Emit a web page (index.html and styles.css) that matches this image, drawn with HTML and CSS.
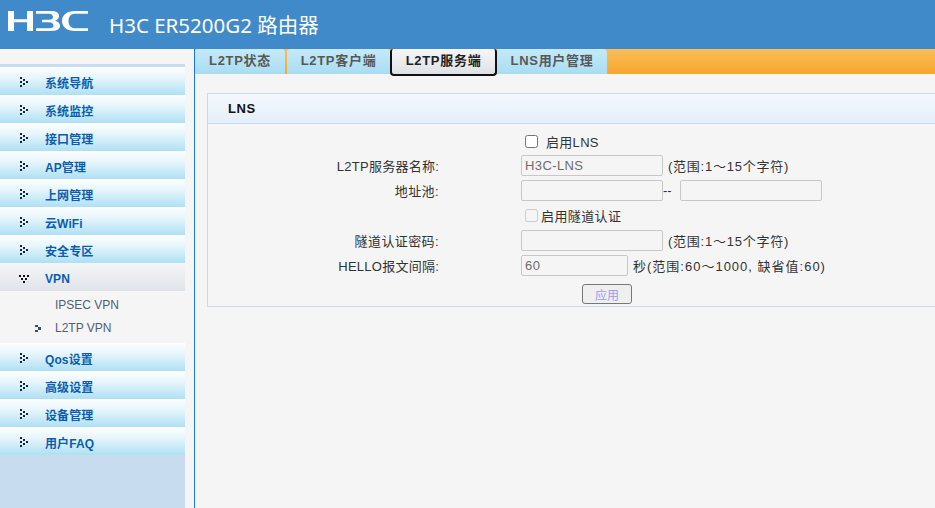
FILE: index.html
```html
<!DOCTYPE html>
<html lang="zh">
<head>
<meta charset="utf-8">
<title>H3C ER5200G2 路由器</title>
<link rel="stylesheet" href="styles.css">
</head>
<body>
<svg class="defs" width="0" height="0" aria-hidden="true">
  <symbol id="arr" viewBox="0 0 10 12">
    <path d="M1 1h2v2H1zM4 3h2v2H4zM7 5h2v2H7zM1 5h2v2H1zM4 7h2v2H4zM1 9h2v2H1z" fill="#1c2340"/>
  </symbol>
  <symbol id="arrd" viewBox="0 0 12 9">
    <path d="M1 0h2v2H1zM5 0h2v2H5zM9 0h2v2H9zM3 3h2v2H3zM7 3h2v2H7zM5 6h2v2H5z" fill="#111"/>
  </symbol>
</svg>
<header class="top">
  <svg class="logo" viewBox="0 0 80 20" aria-label="H3C">
    <path fill="#fff" d="M0 0h6v8.300h13V0h6v20h-6V11.200H6V20H0z"/>
    <path fill="#fff" d="M28 0h15c5 0 8 1.500 8 5 0 2.500-1.500 4-4 4.800 3 .7 5 2.300 5 5 0 3.500-3.500 5.200-9 5.200H28v-2.800h13c3 0 4.500-.8 4.500-2.500S44 11.300 41 11.300h-7V8.700h7c2.500 0 4-.8 4-2.500S43.500 2.800 41 2.800H28z"/>
    <path fill="#fff" d="M80 0H67C59 0 54 4 54 10s5 10 13 10h13v-2.800H67c-4 0-6.500-2.800-6.500-7.200S63 2.800 67 2.800h13z"/>
  </svg>
  <h1 class="title">H3C ER5200G2 路由器</h1>
</header>
<div class="main">
  <nav class="side">
    <div class="side-top"></div>
    <a class="item"><svg class="arr"><use href="#arr"/></svg><span>系统导航</span></a>
    <a class="item"><svg class="arr"><use href="#arr"/></svg><span>系统监控</span></a>
    <a class="item"><svg class="arr"><use href="#arr"/></svg><span>接口管理</span></a>
    <a class="item"><svg class="arr"><use href="#arr"/></svg><span>AP管理</span></a>
    <a class="item"><svg class="arr"><use href="#arr"/></svg><span>上网管理</span></a>
    <a class="item"><svg class="arr"><use href="#arr"/></svg><span>云WiFi</span></a>
    <a class="item"><svg class="arr"><use href="#arr"/></svg><span>安全专区</span></a>
    <a class="item open"><svg class="arr-d"><use href="#arrd"/></svg><span>VPN</span></a>
    <div class="subs">
      <a class="sub">IPSEC VPN</a>
      <a class="sub current"><svg class="cur-arr" viewBox="0 0 7 7"><path d="M0 0h3v2h3v3H3v2H0V5h3V2H0z" fill="#3f4d66"/></svg>L2TP VPN</a>
    </div>
    <a class="item"><svg class="arr"><use href="#arr"/></svg><span>Qos设置</span></a>
    <a class="item"><svg class="arr"><use href="#arr"/></svg><span>高级设置</span></a>
    <a class="item"><svg class="arr"><use href="#arr"/></svg><span>设备管理</span></a>
    <a class="item"><svg class="arr"><use href="#arr"/></svg><span>用户FAQ</span></a>
  </nav>
  <div class="gutter"></div>
  <main class="content">
    <div class="tabs">
      <a class="tab t1">L2TP状态</a>
      <a class="tab t2">L2TP客户端</a>
      <a class="tab active">L2TP服务端</a>
      <a class="tab t4">LNS用户管理</a>
    </div>
    <section class="card">
      <h2 class="card-head">LNS</h2>
      <form class="form">
        <div class="row r-check1"><span class="lab"></span><label class="val"><input type="checkbox" class="cb"><span class="cb-t1">启用LNS</span></label></div>
        <div class="row"><span class="lab lab-latin">L2TP服务器名称:</span><div class="val"><input class="inp w142" value="H3C-LNS" disabled><span class="hint">(范围:1～15个字符)</span></div></div>
        <div class="row"><span class="lab">地址池:</span><div class="val"><input class="inp w142" disabled><span class="dash">--</span><input class="inp w142" disabled></div></div>
        <div class="row"><span class="lab"></span><label class="val"><input type="checkbox" class="cb" disabled><span class="cb-t2">启用隧道认证</span></label></div>
        <div class="row"><span class="lab">隧道认证密码:</span><div class="val"><input class="inp w142" disabled><span class="hint">(范围:1～15个字符)</span></div></div>
        <div class="row"><span class="lab lab-latin">HELLO报文间隔:</span><div class="val"><input class="inp w107" value="60" disabled><span class="hint sec">秒(范围:60～1000, 缺省值:60)</span></div></div>
        <div class="actions"><button type="button" class="btn" disabled>应用</button></div>
      </form>
    </section>
  </main>
</div>
</body>
</html>
```
FILE: styles.css
```css
* { box-sizing: border-box; }
html, body { margin: 0; height: 100%; overflow: hidden; }
body {
  background: #f5f5f5;
  font-family: "Liberation Sans", "Noto Sans CJK SC", sans-serif;
  font-size: 13px;
  color: #333;
}
.defs { position: absolute; }
.top {
  height: 49px;
  background: #418aca;
  display: flex;
  align-items: center;
}
.logo { width: 80px; height: 20px; margin: 0 0 7px 8px; flex: none; }
.title {
  margin: 0 0 2px 21px;
  font: 400 20.5px "Noto Sans", "Noto Sans CJK SC", sans-serif;
  color: #fff;
}
.main { display: flex; height: 459px; }
.side {
  width: 185px;
  flex: none;
  display: flex;
  flex-direction: column;
  background: #c8dcf0;
}
.side-top {
  height: 18px;
  background: #f5f5f5;
  border-bottom: 3px solid #c8dcf0;
}
.item {
  height: 28px;
  padding-top: 2px;
  flex: none;
  display: flex;
  align-items: center;
  background: linear-gradient(#fdfeff 0%, #e6f5fb 40%, #aee0f3 100%);
  color: #0a5db0;
  font-weight: 700;
  font-size: 12px;
}
.item span { margin-left: 16px; letter-spacing: .1px; }
.arr { width: 10px; height: 12px; margin-left: 19px; flex: none; }
.arr-d { width: 12px; height: 9px; margin: 2px 0 0 18px; flex: none; }
.open { background: linear-gradient(#f3f5f7 0%, #eceef1 45%, #dfe3e7 100%); }
.open span { margin-left: 15px; padding-top: 2px; }
.subs {
  height: 52px;
  flex: none;
  background: #f5f5f5;
  display: flex;
  flex-direction: column;
  padding-top: 3px;
}
.sub {
  height: 23px;
  line-height: 23px;
  padding-left: 55px;
  font-size: 12px;
  color: #4f5f78;
}
.current { display: flex; align-items: center; padding-left: 35px; }
.cur-arr { width: 7px; height: 7px; margin-right: 13px; flex: none; }
.gutter {
  width: 10px;
  flex: none;
  border-right: 1px solid #1a73e8;
}
.content { flex: 1; min-width: 0; }
.tabs {
  height: 25px;
  display: flex;
  background: linear-gradient(#fbbd58, #f6a72c);
}
.tab {
  height: 25px;
  line-height: 23px;
  text-align: center;
  font-weight: 700;
  font-size: 13px;
  letter-spacing: .7px;
  color: #585858;
  background: linear-gradient(#c5e9f7, #a9ddf2);
  border-radius: 3px 3px 0 0;
  flex: none;
}
.t1 { width: 90px; margin-right: 2px; }
.t2 { width: 103px; }
.active {
  width: 107px;
  height: 27px;
  line-height: 23px;
  color: #222;
  background: linear-gradient(#f5f6f7, #dfe2e5);
  border: 2px solid #111;
  border-top: 0;
  border-radius: 3px 3px 4px 4px;
  z-index: 1;
}
.t4 { width: 110px; border-radius: 0 4px 0 0; }
.card {
  margin: 19px 0 0 12px;
  height: 214px;
  border: 1px solid #c4dcf2;
  border-right: 0;
}
.card-head {
  margin: 0;
  height: 30px;
  line-height: 30px;
  padding-left: 20px;
  font-size: 13px;
  font-weight: 700;
  letter-spacing: .6px;
  color: #111;
  background: linear-gradient(#f4f8fd, #e4effa);
  border-bottom: 1px solid #c4dcf2;
}
.form { display: flex; flex-direction: column; padding-top: 6px; }
.row { display: flex; align-items: center; height: 25px; }
.r-check1 { height: 23px; }
.lab { width: 231px; text-align: right; flex: none; letter-spacing: .4px; }
.lab-latin { letter-spacing: .25px; }
.val { margin-left: 82px; display: flex; align-items: center; }
.inp {
  height: 21px;
  border: 1px solid #c8c8c8;
  border-radius: 2px;
  background: #f5f5f5;
  padding: 0 3px;
  font: 13px "Liberation Sans", sans-serif;
  letter-spacing: .4px;
  color: #6d6d6d;
}
.w142 { width: 142px; }
.w107 { width: 107px; }
.hint { margin-left: 5px; letter-spacing: .75px; }
.sec { letter-spacing: 1px; }
.dash { width: 17px; }
.cb { width: 13px; height: 13px; margin: 0 0 0 4px; }
.cb-t1 { margin-left: 8px; letter-spacing: .3px; }
.cb-t2 { margin-left: 3px; letter-spacing: .4px; }
.actions { display: flex; padding: 6px 0 0 374px; }
.btn {
  width: 50px;
  height: 20px;
  padding: 0;
  border: 1px solid #777;
  border-radius: 3px;
  background: #efefef;
  color: #9d9cf0;
  font: 12px "Liberation Sans", "Noto Sans CJK SC", sans-serif;
}
```
